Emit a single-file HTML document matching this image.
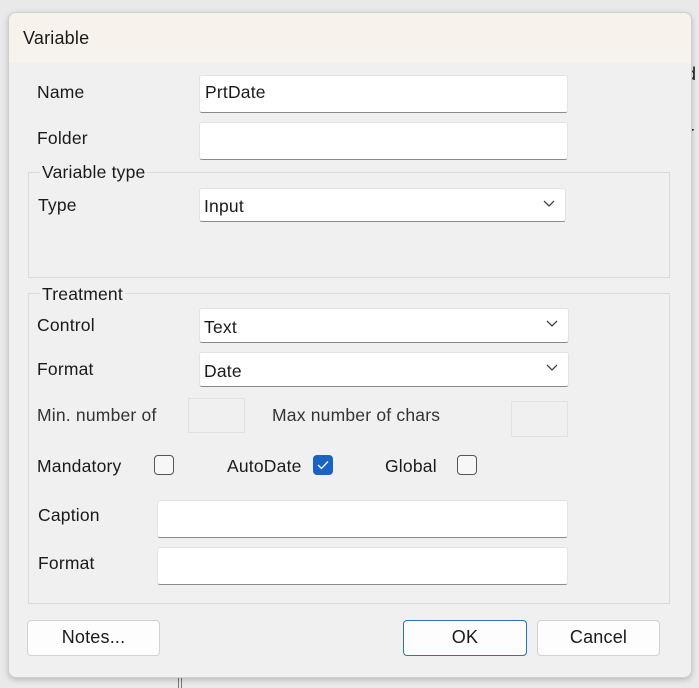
<!DOCTYPE html><html><head><style>
body{margin:0;width:699px;height:688px;background:#e9e9e9;font-family:"Liberation Sans",sans-serif;font-size:17.5px;letter-spacing:0.2px;color:#1a1a1a;position:relative;overflow:hidden}
.a{position:absolute}
.dlg{left:8px;top:12px;width:682px;height:664px;background:#f0f0f0;border:1px solid #cfcfcf;border-radius:8px;box-shadow:0 2px 6px rgba(0,0,0,.2);overflow:hidden}
.tb{left:0;top:0;width:682px;height:50px;background:#f8f2ec}
.in{background:#fff;border:1px solid #e3e3e3;border-bottom:1px solid #8a8a8a;border-radius:3px;box-sizing:border-box}
.dis{background:#f0f0f0;border:1px solid #e2e2e2;box-sizing:border-box}
.grp{border:1px solid #dcdcdc;box-sizing:border-box}
.lg{background:#f0f0f0;padding:0 2px}
.cb{width:20px;height:20px;border:1.5px solid #555;border-radius:4px;box-sizing:border-box;background:#f7f7f7}
.btn{background:#fdfdfd;border:1px solid #d2d2d2;border-radius:4px;box-sizing:border-box;text-align:center;line-height:33px;font-size:18px}
.chev{position:absolute;right:10px;top:11px}
</style></head><body>
<div class="a" style="left:686px;top:64px;font-size:18px">d</div>
<div class="a" style="left:688px;top:123px;font-size:18px">r</div>
<div class="a" style="left:178px;top:676px;width:2px;height:12px;border-left:1px solid #777;border-right:1px solid #777"></div>
<div class="a dlg">
<div class="a tb"></div>
<div class="a" style="left:14px;top:15px;font-size:18px">Variable</div>
</div>
<div class="a" style="left:37px;top:82px">Name</div>
<div class="a in" style="left:199px;top:75px;width:369px;height:38px"></div>
<div class="a" style="left:205px;top:82px">PrtDate</div>
<div class="a" style="left:37px;top:128px">Folder</div>
<div class="a in" style="left:199px;top:122px;width:369px;height:38px"></div>
<div class="a grp" style="left:28px;top:172px;width:642px;height:106px"></div>
<div class="a lg" style="left:40px;top:162px">Variable type</div>
<div class="a" style="left:38px;top:195px">Type</div>
<div class="a in" style="left:199px;top:188px;width:367px;height:34px"><span class="a" style="left:4px;top:7px">Input</span><svg class="chev" width="12" height="8"><path d="M1 1l5 5 5-5" fill="none" stroke="#444" stroke-width="1.3"/></svg></div>
<div class="a grp" style="left:28px;top:293px;width:642px;height:311px"></div>
<div class="a lg" style="left:40px;top:284px">Treatment</div>
<div class="a" style="left:37px;top:315px">Control</div>
<div class="a in" style="left:199px;top:308px;width:370px;height:35px"><span class="a" style="left:4px;top:8px">Text</span><svg class="chev" width="12" height="8"><path d="M1 1l5 5 5-5" fill="none" stroke="#444" stroke-width="1.3"/></svg></div>
<div class="a" style="left:37px;top:359px">Format</div>
<div class="a in" style="left:199px;top:352px;width:370px;height:35px"><span class="a" style="left:4px;top:8px">Date</span><svg class="chev" width="12" height="8"><path d="M1 1l5 5 5-5" fill="none" stroke="#444" stroke-width="1.3"/></svg></div>
<div class="a" style="left:37px;top:405px;color:#333">Min. number of</div>
<div class="a dis" style="left:188px;top:398px;width:57px;height:35px"></div>
<div class="a" style="left:272px;top:405px;color:#333">Max number of chars</div>
<div class="a dis" style="left:511px;top:401px;width:57px;height:36px"></div>
<div class="a" style="left:37px;top:456px">Mandatory</div>
<div class="a cb" style="left:154px;top:455px"></div>
<div class="a" style="left:227px;top:456px">AutoDate</div>
<div class="a cb" style="left:313px;top:455px;background:#1a63c4;border-color:#1a63c4"><svg class="a" style="left:3px;top:4px" width="12" height="10"><path d="M1 5l3.5 3.5L11 1.5" fill="none" stroke="#fff" stroke-width="1.3"/></svg></div>
<div class="a" style="left:385px;top:456px">Global</div>
<div class="a cb" style="left:457px;top:455px"></div>
<div class="a" style="left:38px;top:505px">Caption</div>
<div class="a in" style="left:157px;top:500px;width:411px;height:38px"></div>
<div class="a" style="left:38px;top:553px">Format</div>
<div class="a in" style="left:157px;top:547px;width:411px;height:38px"></div>
<div class="a btn" style="left:27px;top:620px;width:133px;height:36px">Notes...</div>
<div class="a btn" style="left:403px;top:620px;width:124px;height:36px;border:1.5px solid #2a6fc9">OK</div>
<div class="a btn" style="left:537px;top:620px;width:123px;height:36px">Cancel</div>
</body></html>
